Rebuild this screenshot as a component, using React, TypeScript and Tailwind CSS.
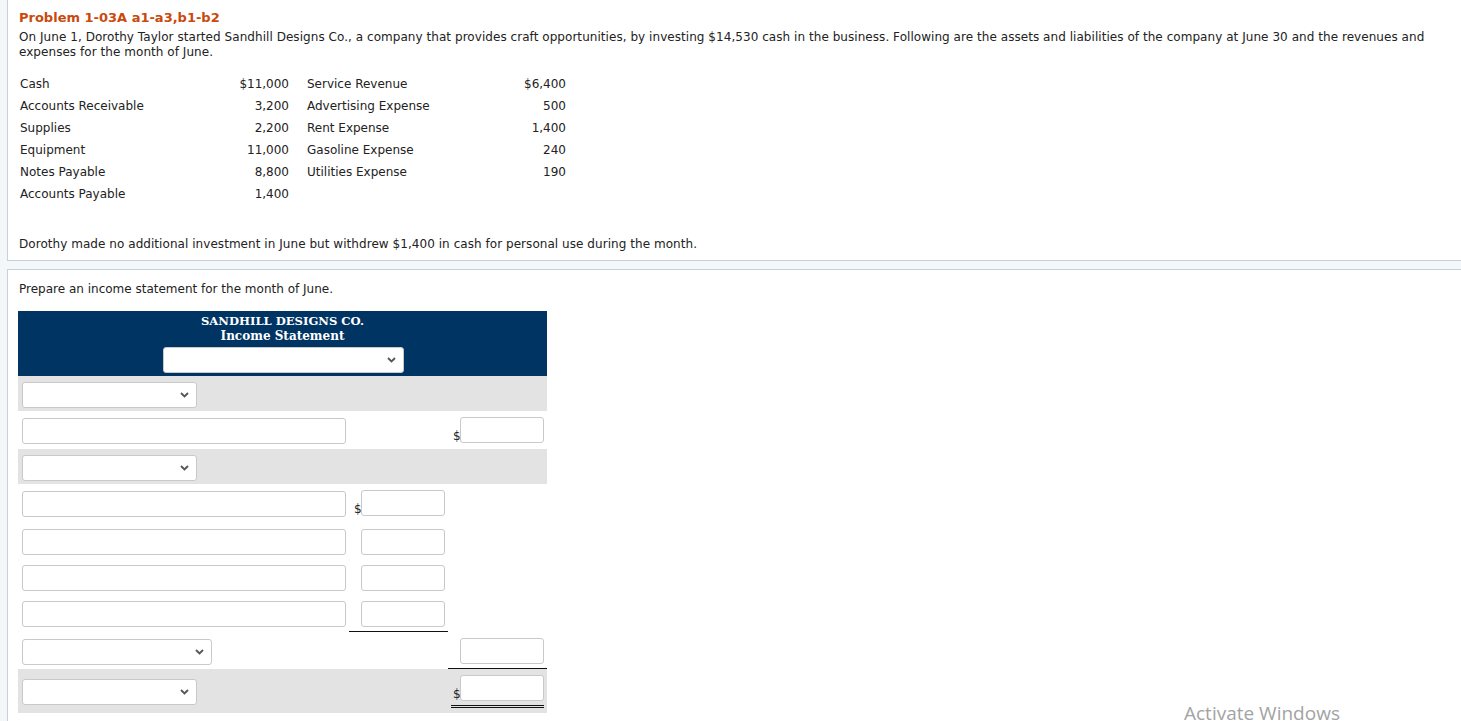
import React from 'react'

const dataRows = [
  ['Cash', '$11,000', 'Service Revenue', '$6,400'],
  ['Accounts Receivable', '3,200', 'Advertising Expense', '500'],
  ['Supplies', '2,200', 'Rent Expense', '1,400'],
  ['Equipment', '11,000', 'Gasoline Expense', '240'],
  ['Notes Payable', '8,800', 'Utilities Expense', '190'],
  ['Accounts Payable', '1,400', '', ''],
]

function Chevron() {
  return (
    <svg width="9" height="6" viewBox="0 0 9 6" className="shrink-0">
      <polyline points="1,1 4.5,4.5 8,1" fill="none" stroke="#555" strokeWidth="1.8" />
    </svg>
  )
}

function Select({ w }: { w: string }) {
  return (
    <div className={`${w} h-[26px] bg-white border border-[#c9c9c9] rounded-[3px] flex items-center justify-end pr-[7px]`}>
      <Chevron />
    </div>
  )
}

function Box({ w }: { w: string }) {
  return <div className={`${w} h-[26px] bg-white border border-[#c9c9c9] rounded-[3px]`} />
}

function Dollar() {
  return <span className="w-[8px] text-[12px] leading-none mb-[1px] pl-[1px]">$</span>
}

export default function App() {
  return (
    <div className="relative min-h-screen bg-[#f4f7fa] text-[12px] text-[#222] font-['DejaVu_Sans',Verdana,sans-serif] overflow-hidden">
      {/* problem statement */}
      <div className="ml-[7px] bg-white border-l border-b border-[#c6d1dc] pl-[11px] pr-[26px] pt-[10px] pb-[8px]">
        <h1 className="text-[13px] leading-[16px] font-bold text-[#c94a0d]">Problem 1-03A a1-a3,b1-b2</h1>
        <p className="mt-[4px] leading-[15px] tracking-[0.05px]">
          On June 1, Dorothy Taylor started Sandhill Designs Co., a company that provides craft opportunities, by
          investing $14,530 cash in the business. Following are the assets and liabilities of the company at June 30
          and the revenues and expenses for the month of June.
        </p>
        <div className="mt-[13px] ml-[1px]">
          {dataRows.map(([a, b, c, d]) => (
            <div key={a} className="flex h-[22px] items-center">
              <span className="w-[190px]">{a}</span>
              <span className="w-[79px] text-right">{b}</span>
              <span className="w-[18px]" />
              <span className="w-[180px]">{c}</span>
              <span className="w-[79px] text-right">{d}</span>
            </div>
          ))}
        </div>
        <p className="mt-[32px] leading-[15px] tracking-[0.05px]">
          Dorothy made no additional investment in June but withdrew $1,400 in cash for personal use during the month.
        </p>
      </div>

      {/* income statement */}
      <div className="mt-[8px] ml-[7px] bg-white border-l border-t border-[#c6d1dc] pl-[10px] pt-[12px] pb-[12px]">
        <p className="leading-[15px] pl-[1px]">Prepare an income statement for the month of June.</p>

        <div className="mt-[14px] w-[529px]">
          <div className="bg-[#003462] h-[65px] pt-[3px] flex flex-col items-center text-white font-bold font-['DejaVu_Serif',Georgia,serif] text-[12px] leading-[15px]">
            <div className="text-[11.6px]">SANDHILL DESIGNS CO.</div>
            <div>Income Statement</div>
            <div className="mt-[3px] ml-[2px]">
              <Select w="w-[241px]" />
            </div>
          </div>

          {/* row 1 */}
          <div className="flex h-[35px] bg-[#e3e3e3] pl-[4px] pt-[6px]">
            <Select w="w-[175px]" />
          </div>

          {/* row 2 */}
          <div className="flex h-[38px]">
            <div className="w-[331px] pl-[4px] pt-[7px]"><Box w="w-[324px]" /></div>
            <div className="w-[99px]" />
            <div className="w-[99px] pl-[4px] pt-[6px] flex items-end h-[32px]">
              <Dollar />
              <Box w="w-[84px]" />
            </div>
          </div>

          {/* row 3 */}
          <div className="flex h-[35px] bg-[#e3e3e3] pl-[4px] pt-[6px]">
            <Select w="w-[175px]" />
          </div>

          {/* row 4 */}
          <div className="flex h-[39px]">
            <div className="w-[331px] pl-[4px] pt-[7px]"><Box w="w-[324px]" /></div>
            <div className="w-[99px] pl-[4px] pt-[6px] flex items-end h-[32px]">
              <Dollar />
              <Box w="w-[84px]" />
            </div>
          </div>

          {/* rows 5-6 */}
          {[0, 1].map(i => (
            <div key={i} className="flex h-[36px]">
              <div className="w-[331px] pl-[4px] pt-[6px]"><Box w="w-[324px]" /></div>
              <div className="w-[99px] pl-[12px] pt-[6px]"><Box w="w-[84px]" /></div>
            </div>
          ))}

          {/* row 7 */}
          <div className="flex h-[37px]">
            <div className="w-[331px] pl-[4px] pt-[6px]"><Box w="w-[324px]" /></div>
            <div className="w-[99px] h-[37px] pl-[12px] pt-[6px] border-b border-[#111]"><Box w="w-[84px]" /></div>
          </div>

          {/* row 8 */}
          <div className="flex h-[37px]">
            <div className="w-[331px] pl-[4px] pt-[7px]"><Select w="w-[190px]" /></div>
            <div className="w-[99px]" />
            <div className="w-[99px] h-[37px] pl-[12px] pt-[6px] border-b border-[#111]"><Box w="w-[84px]" /></div>
          </div>

          {/* row 9 */}
          <div className="flex h-[44px] bg-[#e3e3e3]">
            <div className="w-[331px] pl-[4px] pt-[10px]"><Select w="w-[175px]" /></div>
            <div className="w-[99px]" />
            <div className="w-[99px] pl-[3px] pt-[6px]">
              <div className="w-[93px] flex items-end pb-[4px] border-b-[3px] border-double border-[#111]">
                <span className="w-[9px] pl-[2px] text-[12px] leading-none mb-[1px]">$</span>
                <Box w="w-[84px]" />
              </div>
            </div>
          </div>
        </div>
      </div>

      <div className="absolute left-[1184px] top-[701px] text-[19px] text-[#a3a3a3] font-['Open_Sans',sans-serif] leading-[24px]">
        Activate Windows
      </div>
    </div>
  )
}
